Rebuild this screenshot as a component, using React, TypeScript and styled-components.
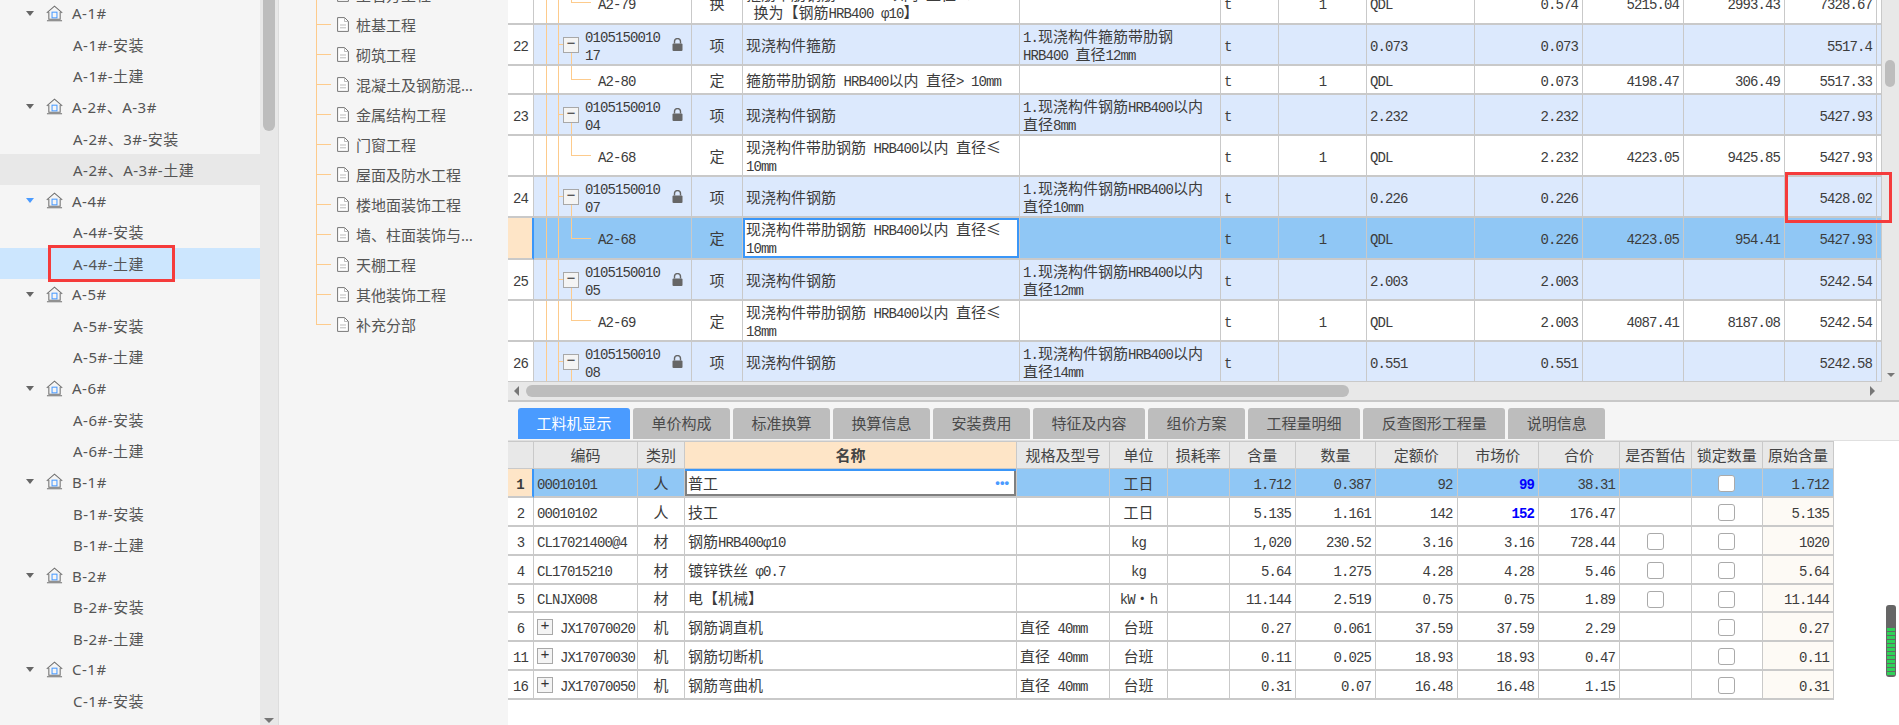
import React from "react"
import styled, { createGlobalStyle, css } from "styled-components"

const GlobalStyle = createGlobalStyle`
  html, body {
    margin: 0;
    padding: 0;
    height: 725px;
    overflow: hidden;
    background: #fff;
  }
  * {
    box-sizing: border-box;
  }
`

const ORANGE = "#fdcb8c"
const GRID_LINE = "#c9c9c9"

const Page = styled.div`
  position: relative;
  display: flex;
  width: 1899px;
  height: 725px;
  overflow: hidden;
  font-family: "Noto Sans", "Noto Sans CJK SC", sans-serif;
  font-size: 15px;
  color: #555;
  background: #f5f5f5;
`

/* left project tree */
const Sidebar = styled.aside`
  display: flex;
  flex: 0 0 279px;
  height: 725px;
  overflow: hidden;
  border-right: 1px solid #ddd;
`
const TreeList = styled.div`
  flex: 0 0 260px;
  margin-top: -2.5px;
`
const TreeRow = styled.div<{ $child?: boolean; $state?: "hover" | "selected" }>`
  display: flex;
  align-items: center;
  gap: 9px;
  height: 31.25px;
  padding-left: ${(p) => (p.$child ? "73px" : "26px")};
  letter-spacing: 0.5px;
  white-space: nowrap;
  background: ${(p) =>
    p.$state === "selected" ? "#cce6fe" : p.$state === "hover" ? "#e8e8e8" : "transparent"};
`
const Caret = styled.span<{ $active?: boolean }>`
  width: 0;
  height: 0;
  margin-right: 3px;
  border-left: 4.5px solid transparent;
  border-right: 4.5px solid transparent;
  border-top: 5px solid ${(p) => (p.$active ? "#4a9bff" : "#666")};
`
const ScrollTrack = styled.div`
  position: relative;
  flex: 0 0 18px;
  background: #e8e8e8;
`
const SideThumb = styled.div`
  width: 12px;
  height: 131px;
  margin-left: 3px;
  border-radius: 0 0 6px 6px;
  background: #bdbdbd;
`
const SideArrow = styled.span`
  position: absolute;
  left: 4px;
  bottom: 2px;
  border-left: 5px solid transparent;
  border-right: 5px solid transparent;
  border-top: 5px solid #777;
`

/* section tree */
const FilePanel = styled.nav`
  flex: 0 0 229px;
  margin-top: -21px;
`
const FileRow = styled.div<{ $last?: boolean }>`
  display: flex;
  align-items: center;
  gap: 7px;
  height: 30px;
  padding-left: 58px;
  background-image: linear-gradient(${ORANGE}, ${ORANGE}), linear-gradient(${ORANGE}, ${ORANGE});
  background-repeat: no-repeat;
  background-position: 37px 0, 37px 15px;
  background-size: 1px ${(p) => (p.$last ? "15px" : "100%")}, 15px 1px;
`
const FileName = styled.span`
  width: 118px;
  overflow: hidden;
  white-space: nowrap;
  text-overflow: ellipsis;
`

/* right work area */
const Main = styled.main`
  flex: 1;
  min-width: 0;
  background: #fff;
`
const GridArea = styled.div`
  display: flex;
  height: 382px;
`
const GridViewport = styled.div`
  flex: 0 0 1374px;
  height: 382px;
  overflow: hidden;
  background: #f5f5f5;
`
const VScroll = styled.div`
  position: relative;
  flex: 1;
  padding-top: 60px;
  background: #e8e8e8;
`
const VThumb = styled.div`
  width: 10px;
  height: 27px;
  margin-left: 3px;
  border-radius: 5px;
  background: #bdbdbd;
`
const VArrow = styled.span`
  position: absolute;
  left: 5px;
  bottom: 5px;
  border-left: 4px solid transparent;
  border-right: 4px solid transparent;
  border-top: 4px solid #777;
`
const HScroll = styled.div`
  display: flex;
  align-items: center;
  height: 18px;
  padding: 0 24px 0 6px;
  background: #e8e8e8;
`
const HThumb = styled.div`
  width: 823px;
  height: 12px;
  margin-left: 7px;
  border-radius: 6px;
  background: #bdbdbd;
`
const ArrowLeft = styled.span`
  border-top: 5px solid transparent;
  border-bottom: 5px solid transparent;
  border-right: 5px solid #777;
`
const ArrowRight = styled.span`
  margin-left: auto;
  border-top: 5px solid transparent;
  border-bottom: 5px solid transparent;
  border-left: 5px solid #777;
`
const Separator = styled.div`
  height: 3px;
  background: #f5f5f5;
  border-top: 2px solid #c8c8c8;
`
const TabStrip = styled.div`
  display: flex;
  align-items: flex-end;
  gap: 3px;
  height: 38px;
  padding: 6px 0 1px 10px;
  background: #f5f5f5;
  border-bottom: 1px solid #e0e0e0;
`
const Tab = styled.div<{ $active?: boolean }>`
  height: 31px;
  padding: 0 18.5px;
  line-height: 31px;
  white-space: nowrap;
  border-radius: 3px 3px 0 0;
  color: ${(p) => (p.$active ? "#fff" : "#4a4a4a")};
  background: ${(p) => (p.$active ? "#4a9bff" : "#bdbdbd")};
`

/* tables */
const Table = styled.table<{ $top?: number; $width: number }>`
  table-layout: fixed;
  width: ${(p) => p.$width}px;
  margin-top: ${(p) => p.$top ?? 0}px;
  border-collapse: separate;
  border-spacing: 0;
  color: #3c3c3c;
  font-family: "Noto Sans CJK SC", sans-serif;
  font-size: 15px;
  line-height: 18px;
`
const Row = styled.tr<{ $h: number; $bg?: string }>`
  height: ${(p) => p.$h}px;
  background: ${(p) => p.$bg ?? "#fff"};
`
const Cell = styled.td<{ $align?: "left" | "right" | "center"; $bg?: string }>`
  padding: 0 ${(p) => (p.$align === "right" ? "4px" : "3px")};
  overflow: hidden;
  white-space: pre-wrap;
  text-align: ${(p) => p.$align ?? "left"};
  border-right: 1px solid ${GRID_LINE};
  border-bottom: 2px solid ${GRID_LINE};
  ${(p) => p.$bg && `background: ${p.$bg};`}
`
const NumCell = styled(Cell)<{ $current?: boolean; $strong?: boolean }>`
  padding: 0;
  text-align: center;
  background: ${(p) => (p.$current ? "#fee5c7" : "#fff")};
  ${(p) => p.$current && "border-right: 2px solid #3a96f8;"}
  ${(p) => p.$strong && "font-weight: 700;"}
`
const EditCell = styled(Cell)<{ $muted?: boolean }>`
  background: #fff;
  box-shadow: ${(p) =>
    p.$muted
      ? "inset 0 2px 0 #3a96f8, inset 2px 0 0 #808080, inset -2px 0 0 #808080, inset 0 -2px 0 #808080"
      : "inset 0 0 0 2px #3a96f8"};
`
const orangeLine = `linear-gradient(${ORANGE}, ${ORANGE})`
const TreeCell = styled(Cell)<{ $kind: "parent" | "child" }>`
  padding: 0;
  background-repeat: no-repeat;
  ${(p) =>
    p.$kind === "parent"
      ? css`
          background-image: ${orangeLine}, ${orangeLine}, ${orangeLine}, ${orangeLine};
          background-position: 12px 0, 24px 0, 24px 50%, 37px 100%;
          background-size: 1px 100%, 1px 100%, 6px 1px, 1px 50%;
        `
      : css`
          background-image: ${orangeLine}, ${orangeLine}, ${orangeLine}, ${orangeLine};
          background-position: 12px 0, 24px 0, 37px 0, 37px 50%;
          background-size: 1px 100%, 1px 100%, 1px 50%, 20px 1px;
        `}
`
const TreeInner = styled.div<{ $child?: boolean }>`
  display: flex;
  align-items: center;
  gap: 6px;
  padding-left: ${(p) => (p.$child ? "64px" : "29px")};
`
const ExpandBox = styled.span`
  display: flex;
  flex: 0 0 16px;
  align-items: center;
  justify-content: center;
  width: 16px;
  height: 16px;
  border: 1px solid #a8a8a8;
  background: #f4f4f4;
  color: #333;
  font-family: "Liberation Mono", monospace;
  font-size: 15px;
  line-height: 1;
`
const LockIcon = styled.svg`
  flex: 0 0 11px;
  margin-left: auto;
  margin-right: 8px;
`
const HeadCell = styled.th<{ $accent?: boolean }>`
  padding: 0;
  overflow: hidden;
  font-weight: ${(p) => (p.$accent ? 700 : 400)};
  white-space: nowrap;
  color: #444;
  background: ${(p) => (p.$accent ? "#fee5c7" : "#e8e8e8")};
  border-top: 1px solid ${GRID_LINE};
  border-right: 1px solid ${GRID_LINE};
  border-bottom: 1px solid ${GRID_LINE};
`
const Latin = styled.span<{ $bold?: boolean }>`
  font-family: "Liberation Mono", monospace;
  font-size: 14px;
  line-height: 14px;
  letter-spacing: -0.9px;
  ${(p) => p.$bold && "font-weight: 700;"}
`
const Price = styled.span`
  color: #0000ff;
  font-weight: 700;
`
const CodeWrap = styled.div`
  display: flex;
  align-items: center;
  gap: 7px;
`
const NameEdit = styled.div`
  display: flex;
  align-items: center;
  justify-content: space-between;
`
const Dots = styled.span`
  margin-right: 4px;
  color: #4a9bff;
  font-family: "Liberation Sans", sans-serif;
  font-size: 13px;
  font-weight: 700;
  letter-spacing: 0;
`
const Check = styled.span`
  display: inline-block;
  width: 17px;
  height: 17px;
  vertical-align: middle;
  border: 1px solid #aaa;
  border-radius: 3px;
  background: #fff;
`

/* things lying on top */
const Callout = styled.div<{ $l: number; $t: number; $w: number; $h: number }>`
  position: absolute;
  left: ${(p) => p.$l}px;
  top: ${(p) => p.$t}px;
  width: ${(p) => p.$w}px;
  height: ${(p) => p.$h}px;
  border: 3px solid #f53b3b;
`
const Meter = styled.svg`
  position: absolute;
  right: 3px;
  top: 605px;
`

const HouseIcon = () => (
  <svg width="17" height="17" viewBox="0 0 18 18" fill="none">
    <path d="M.8 8.4 9 1.2l8.2 7.2M3 7.5V15h12V7.5M1 16.6h16" stroke="#707070" strokeWidth="1.1" />
    <rect x="6.4" y="7.6" width="5.2" height="6" stroke="#4a9bff" strokeWidth="1.1" />
  </svg>
)

const DocIcon = () => (
  <svg width="12" height="15" viewBox="0 0 12 15" fill="none">
    <path d="M.6.6h7l3.8 3.8v10H.6z" fill="#fff" stroke="#777" strokeWidth="1" />
    <path d="M7.5.8v3.7h3.7M3 8h6M3 10.8h6" stroke="#aaa" strokeWidth=".8" />
  </svg>
)

const Lock = () => (
  <LockIcon width="11" height="13" viewBox="0 0 11 13">
    <path d="M2.5 5.5V3.6a3 3 0 0 1 6 0v1.9" fill="none" stroke="#666" strokeWidth="1.4" />
    <rect x=".5" y="5.5" width="10" height="7.5" rx="1" fill="#666" />
  </LockIcon>
)

const Mixed = ({ text }: { text: string }) => (
  <>
    {text
      .split(/([\x20-\x7eφ]+)/)
      .filter(Boolean)
      .map((part, i) =>
        /^[\x20-\x7eφ]+$/.test(part) ? <Latin key={i}>{part}</Latin> : <span key={i}>{part}</span>,
      )}
  </>
)

const treeGroups = ["A-1#", "A-2#、A-3#", "A-4#", "A-5#", "A-6#", "B-1#", "B-2#", "C-1#"]
const childNames: Record<string, [string, string]> = {
  "A-2#、A-3#": ["A-2#、3#-安装", "A-2#、A-3#-土建"],
}

const fileItems = [
  "土石方工程",
  "桩基工程",
  "砌筑工程",
  "混凝土及钢筋混凝土工程",
  "金属结构工程",
  "门窗工程",
  "屋面及防水工程",
  "楼地面装饰工程",
  "墙、柱面装饰与隔断、幕墙工程",
  "天棚工程",
  "其他装饰工程",
  "补充分部",
]

const tabs = [
  "工料机显示",
  "单价构成",
  "标准换算",
  "换算信息",
  "安装费用",
  "特征及内容",
  "组价方案",
  "工程量明细",
  "反查图形工程量",
  "说明信息",
]

const upperCols = [26, 158, 51, 277, 201, 58, 88, 108, 108, 101, 101, 92, 5]

type UpperRow = {
  no?: string
  code: string
  kind: string
  name: string
  feature?: string
  coef?: string
  qty: string
  base?: string
  labor?: string
  total: string
  h: number
  selected?: boolean
}

const FEATURE = "1.现浇构件钢筋HRB400以内\n直径"
const RIB = "现浇构件带肋钢筋 HRB400以内 直径≤\n"

const upperRows: UpperRow[] = [
  { code: "A2-79", kind: "换", name: "箍筋带肋钢筋 HRB400以内 直径≤\n 换为【钢筋HRB400 φ10】", coef: "1", qty: "0.574", base: "5215.04", labor: "2993.43", total: "7328.67", h: 43 },
  { no: "22", code: "0105150010\n17", kind: "项", name: "现浇构件箍筋", feature: "1.现浇构件箍筋带肋钢\nHRB400 直径12mm", qty: "0.073", total: "5517.4", h: 41 },
  { code: "A2-80", kind: "定", name: "箍筋带肋钢筋 HRB400以内 直径> 10mm", coef: "1", qty: "0.073", base: "4198.47", labor: "306.49", total: "5517.33", h: 29 },
  { no: "23", code: "0105150010\n04", kind: "项", name: "现浇构件钢筋", feature: FEATURE + "8mm", qty: "2.232", total: "5427.93", h: 41 },
  { code: "A2-68", kind: "定", name: RIB + "10mm", coef: "1", qty: "2.232", base: "4223.05", labor: "9425.85", total: "5427.93", h: 41 },
  { no: "24", code: "0105150010\n07", kind: "项", name: "现浇构件钢筋", feature: FEATURE + "10mm", qty: "0.226", total: "5428.02", h: 41 },
  { code: "A2-68", kind: "定", name: RIB + "10mm", coef: "1", qty: "0.226", base: "4223.05", labor: "954.41", total: "5427.93", h: 42, selected: true },
  { no: "25", code: "0105150010\n05", kind: "项", name: "现浇构件钢筋", feature: FEATURE + "12mm", qty: "2.003", total: "5242.54", h: 41 },
  { code: "A2-69", kind: "定", name: RIB + "18mm", coef: "1", qty: "2.003", base: "4087.41", labor: "8187.08", total: "5242.54", h: 41 },
  { no: "26", code: "0105150010\n08", kind: "项", name: "现浇构件钢筋", feature: FEATURE + "14mm", qty: "0.551", total: "5242.58", h: 41 },
]

const lowerCols = [26, 104, 47, 332, 93, 58, 61.5, 66.5, 80, 81.5, 81.5, 81, 71.5, 71.5, 71]
const lowerHead = ["", "编码", "类别", "名称", "规格及型号", "单位", "损耗率", "含量", "数量", "定额价", "市场价", "合价", "是否暂估", "锁定数量", "原始含量"]

type LowerRow = {
  no: string
  code: string
  expand?: boolean
  kind: string
  name: string
  spec?: string
  unit: string
  amount: string
  count: string
  quota: string
  market: string
  marketChanged?: boolean
  sum: string
  estimate?: boolean
  origin: string
  h: number
}

const lowerRows: LowerRow[] = [
  { no: "1", code: "00010101", kind: "人", name: "普工", unit: "工日", amount: "1.712", count: "0.387", quota: "92", market: "99", marketChanged: true, sum: "38.31", origin: "1.712", h: 29 },
  { no: "2", code: "00010102", kind: "人", name: "技工", unit: "工日", amount: "5.135", count: "1.161", quota: "142", market: "152", marketChanged: true, sum: "176.47", origin: "5.135", h: 29 },
  { no: "3", code: "CL17021400@4", kind: "材", name: "钢筋HRB400φ10", unit: "kg", amount: "1,020", count: "230.52", quota: "3.16", market: "3.16", sum: "728.44", estimate: true, origin: "1020", h: 29 },
  { no: "4", code: "CL17015210", kind: "材", name: "镀锌铁丝 φ0.7", unit: "kg", amount: "5.64", count: "1.275", quota: "4.28", market: "4.28", sum: "5.46", estimate: true, origin: "5.64", h: 29 },
  { no: "5", code: "CLNJX008", kind: "材", name: "电【机械】", unit: "kW・h", amount: "11.144", count: "2.519", quota: "0.75", market: "0.75", sum: "1.89", estimate: true, origin: "11.144", h: 28 },
  { no: "6", code: "JX17070020", expand: true, kind: "机", name: "钢筋调直机", spec: "直径 40mm", unit: "台班", amount: "0.27", count: "0.061", quota: "37.59", market: "37.59", sum: "2.29", origin: "0.27", h: 29 },
  { no: "11", code: "JX17070030", expand: true, kind: "机", name: "钢筋切断机", spec: "直径 40mm", unit: "台班", amount: "0.11", count: "0.025", quota: "18.93", market: "18.93", sum: "0.47", origin: "0.11", h: 29 },
  { no: "16", code: "JX17070050", expand: true, kind: "机", name: "钢筋弯曲机", spec: "直径 40mm", unit: "台班", amount: "0.31", count: "0.07", quota: "16.48", market: "16.48", sum: "1.15", origin: "0.31", h: 29 },
]

const BLUE_ROW = "#dce9fd"
const SELECTED_ROW = "#90c7f5"

const App = (): React.ReactElement => (
  <Page>
    <GlobalStyle />
    <Sidebar>
      <TreeList>
        {treeGroups.map((group) => {
          const [install, civil] = childNames[group] ?? [`${group}-安装`, `${group}-土建`]
          return (
            <React.Fragment key={group}>
              <TreeRow>
                <Caret $active={group === "A-4#"} />
                <HouseIcon />
                {group}
              </TreeRow>
              <TreeRow $child>{install}</TreeRow>
              <TreeRow
                $child
                $state={group === "A-4#" ? "selected" : group === "A-2#、A-3#" ? "hover" : undefined}
              >
                {civil}
              </TreeRow>
            </React.Fragment>
          )
        })}
      </TreeList>
      <ScrollTrack>
        <SideThumb />
        <SideArrow />
      </ScrollTrack>
    </Sidebar>

    <FilePanel>
      {fileItems.map((item, i) => (
        <FileRow key={item} $last={i === fileItems.length - 1}>
          <DocIcon />
          <FileName>{item}</FileName>
        </FileRow>
      ))}
    </FilePanel>

    <Main>
      <GridArea>
        <GridViewport>
          <Table $top={-18} $width={1374}>
            <colgroup>
              {upperCols.map((w, i) => (
                <col key={i} width={w} />
              ))}
            </colgroup>
            <tbody>
              {upperRows.map((r, i) => {
                const parent = Boolean(r.no)
                return (
                  <Row key={i} $h={r.h} $bg={r.selected ? SELECTED_ROW : parent ? BLUE_ROW : "#fff"}>
                    <NumCell $current={r.selected}>
                      {r.no && <Mixed text={r.no} />}
                    </NumCell>
                    <TreeCell $kind={parent ? "parent" : "child"}>
                      <TreeInner $child={!parent}>
                        {parent && <ExpandBox>−</ExpandBox>}
                        <div>
                          <Mixed text={r.code} />
                        </div>
                        {parent && <Lock />}
                      </TreeInner>
                    </TreeCell>
                    <Cell $align="center">{r.kind}</Cell>
                    {r.selected ? (
                      <EditCell>
                        <Mixed text={r.name} />
                      </EditCell>
                    ) : (
                      <Cell>
                        <Mixed text={r.name} />
                      </Cell>
                    )}
                    <Cell>{r.feature && <Mixed text={r.feature} />}</Cell>
                    <Cell>
                      <Mixed text="t" />
                    </Cell>
                    <Cell $align="center">{r.coef && <Mixed text={r.coef} />}</Cell>
                    <Cell>
                      <Mixed text={parent ? r.qty : "QDL"} />
                    </Cell>
                    <Cell $align="right">
                      <Mixed text={r.qty} />
                    </Cell>
                    <Cell $align="right">{r.base && <Mixed text={r.base} />}</Cell>
                    <Cell $align="right">{r.labor && <Mixed text={r.labor} />}</Cell>
                    <Cell $align="right">
                      <Mixed text={r.total} />
                    </Cell>
                    <Cell />
                  </Row>
                )
              })}
            </tbody>
          </Table>
        </GridViewport>
        <VScroll>
          <VThumb />
          <VArrow />
        </VScroll>
      </GridArea>
      <HScroll>
        <ArrowLeft />
        <HThumb />
        <ArrowRight />
      </HScroll>
      <Separator />
      <TabStrip>
        {tabs.map((t, i) => (
          <Tab key={t} $active={i === 0}>
            {t}
          </Tab>
        ))}
      </TabStrip>

      <Table $width={1326}>
        <colgroup>
          {lowerCols.map((w, i) => (
            <col key={i} width={w} />
          ))}
        </colgroup>
        <thead>
          <Row $h={28} $bg="#e8e8e8">
            {lowerHead.map((h, i) => (
              <HeadCell key={i} $accent={h === "名称"}>
                {h}
              </HeadCell>
            ))}
          </Row>
        </thead>
        <tbody>
          {lowerRows.map((r, i) => {
            const current = i === 0
            return (
              <Row key={r.no} $h={r.h} $bg={current ? SELECTED_ROW : "#fff"}>
                <NumCell $current={current} $strong={current}>
                  <Mixed text={r.no} />
                </NumCell>
                <Cell>
                  <CodeWrap>
                    {r.expand && <ExpandBox>+</ExpandBox>}
                    <div>
                      <Mixed text={r.code} />
                    </div>
                  </CodeWrap>
                </Cell>
                <Cell $align="center">{r.kind}</Cell>
                {current ? (
                  <EditCell $muted>
                    <NameEdit>
                      {r.name}
                      <Dots>•••</Dots>
                    </NameEdit>
                  </EditCell>
                ) : (
                  <Cell>
                    <Mixed text={r.name} />
                  </Cell>
                )}
                <Cell>{r.spec && <Mixed text={r.spec} />}</Cell>
                <Cell $align="center">
                  <Mixed text={r.unit} />
                </Cell>
                <Cell />
                <Cell $align="right">
                  <Mixed text={r.amount} />
                </Cell>
                <Cell $align="right">
                  <Mixed text={r.count} />
                </Cell>
                <Cell $align="right">
                  <Mixed text={r.quota} />
                </Cell>
                <Cell $align="right">
                  {r.marketChanged ? (
                    <Price>
                      <Latin $bold>{r.market}</Latin>
                    </Price>
                  ) : (
                    <Mixed text={r.market} />
                  )}
                </Cell>
                <Cell $align="right">
                  <Mixed text={r.sum} />
                </Cell>
                <Cell $align="center">{r.estimate && <Check />}</Cell>
                <Cell $align="center">
                  <Check />
                </Cell>
                <Cell $align="right" $bg={current ? undefined : "#fdfaf5"}>
                  <Mixed text={r.origin} />
                </Cell>
              </Row>
            )
          })}
        </tbody>
      </Table>
    </Main>

    <Callout $l={48} $t={245} $w={127} $h={37} />
    <Callout $l={1785} $t={172} $w={107} $h={51} />
    <Meter width="10" height="72" viewBox="0 0 10 72">
      <rect width="10" height="72" rx="3" fill="#666" />
      {Array.from({ length: 12 }, (_, i) => (
        <rect key={i} x="1" y={23 + i * 4} width="8" height="3" fill="#2fd158" />
      ))}
    </Meter>
  </Page>
)

export default App
